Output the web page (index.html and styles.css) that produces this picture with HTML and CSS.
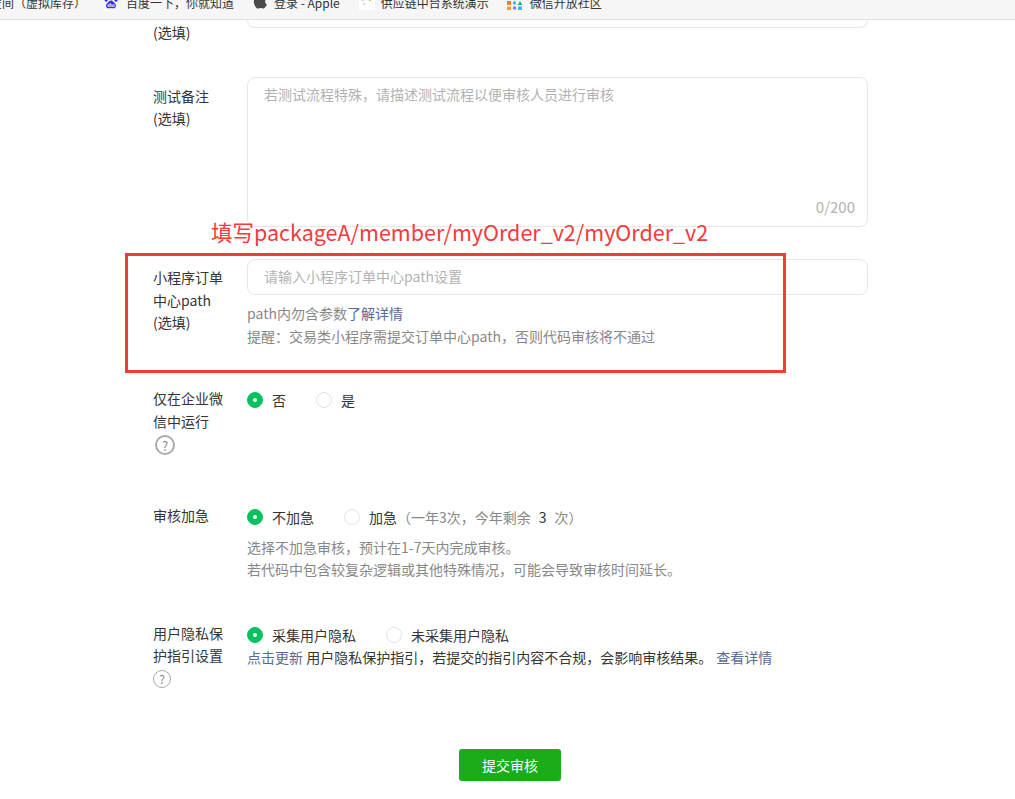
FILE: index.html
```html
<!DOCTYPE html>
<html lang="zh-CN">
<head>
<meta charset="utf-8">
<title>提交审核</title>
<link rel="stylesheet" href="styles.css">
</head>
<body>
<div class="bar">
  <span class="bm bm-first">空间（虚拟库存）</span>
  <span class="bm bm-baidu">
    <svg class="ic" viewBox="0 0 16 16"><g fill="#2932e1"><ellipse cx="3.2" cy="5.5" rx="1.7" ry="2.2"/><ellipse cx="6.3" cy="2.4" rx="1.6" ry="2.2"/><ellipse cx="10" cy="2.4" rx="1.6" ry="2.2"/><ellipse cx="13" cy="5.5" rx="1.7" ry="2.2"/><path d="M8 6.5c2 0 2.6 2 4 3 1.6 1.2 1.3 4.8-1.6 4.8-1 0-1.5-.4-2.4-.4s-1.500.4-2.400.4C2.700 14.300 2.400 10.700 4 9.500c1.400-1 2-3 4-3z"/></g><text x="8" y="13" text-anchor="middle" class="du">du</text></svg>
    百度一下，你就知道</span>
  <span class="bm bm-apple">
    <svg class="ic" viewBox="0 0 16 16"><path fill="#4a4a4a" d="M11.200 1c.1 1.100-.3 2-.9 2.700-.6.7-1.500 1.200-2.400 1.100-.1-1 .4-2 .9-2.600C9.400 1.500 10.400 1 11.200 1zM14 11.300c-.4.900-.6 1.300-1.100 2.100-.7 1.100-1.700 2.400-2.900 2.400-1.100 0-1.400-.7-2.800-.7s-1.800.7-2.900.7c-1.200 0-2.100-1.200-2.800-2.300C-.5 10.600-.7 7 .6 5.100c.9-1.300 2.300-2.100 3.600-2.100 1.400 0 2.200.7 3.300.7 1.100 0 1.700-.7 3.300-.7 1.200 0 2.400.6 3.300 1.700-2.900 1.600-2.400 5.700-.1 6.600z" transform="translate(1 0) scale(.92)"/></svg>
    登录 - Apple</span>
  <span class="bm bm-chain">
    <svg class="ic" viewBox="0 0 16 16"><rect width="16" height="16" fill="#fff"/><circle cx="8" cy="3" r="1.500" fill="#e0483d"/><circle cx="4" cy="6" r="1" fill="#b9c2c9"/><circle cx="11" cy="6" r="1" fill="#f0a030"/><circle cx="5" cy="10" r="1" fill="#c9ced3"/></svg>
    供应链中台系统演示</span>
  <span class="bm bm-open">
    <svg class="ic" viewBox="0 0 16 16"><path d="M3 0l2.500 4h-5z" fill="#8a7cf0" transform="translate(0 1)"/><circle cx="8.500" cy="3" r="2.200" fill="#07c160"/><path d="M14 .8l2 2.200-2 2.200-2-2.200z" fill="#5a8df5"/><rect x="1" y="7" width="4" height="4" fill="#fa7a2d"/><path d="M8.500 6.800l2 2.200-2 2.200-2-2.200z" fill="#3fb6ef"/><path d="M14 7l2.300 4h-4.600z" fill="#07c160"/><rect x="1" y="12.500" width="4" height="3.500" fill="#fa9d3b"/><circle cx="8.500" cy="14" r="1.800" fill="#8a7cf0"/><rect x="12" y="12.500" width="4" height="3.500" fill="#3fb6ef"/></svg>
    微信开放社区</span>
</div>

<main class="form">
  <div class="row row-a">
    <div class="label label-a">(选填)</div>
    <div class="field"><div class="stub"></div></div>
  </div>

  <div class="row row-b">
    <div class="label label-b">测试备注<br>(选填)</div>
    <div class="field">
      <div class="textarea">
        <span class="ph">若测试流程特殊，请描述测试流程以便审核人员进行审核</span>
        <span class="count">0/200</span>
      </div>
    </div>
  </div>

  <div class="row row-c">
    <div class="label label-c">小程序订单<br>中心path<br>(选填)</div>
    <div class="field">
      <div class="input"><span class="ph">请输入小程序订单中心path设置</span></div>
      <p class="help help-c">path内勿含参数<a class="link">了解详情</a></p>
      <p class="help">提醒：交易类小程序需提交订单中心path，否则代码审核将不通过</p>
    </div>
  </div>

  <div class="row row-d">
    <div class="label label-d">仅在企业微<br>信中运行<br><span class="q">?</span></div>
    <div class="field">
      <div class="radios">
        <span class="radio on"></span><span class="rt">否</span>
        <span class="radio"></span><span class="rt">是</span>
      </div>
    </div>
  </div>

  <div class="row row-e">
    <div class="label label-e">审核加急</div>
    <div class="field">
      <div class="radios">
        <span class="radio on"></span><span class="rt">不加急</span>
        <span class="radio"></span><span class="rt">加急<span class="muted">（一年3次，今年剩余</span><span class="num">3</span><span class="muted">次）</span></span>
      </div>
      <p class="help help-e">选择不加急审核，预计在1-7天内完成审核。</p>
      <p class="help">若代码中包含较复杂逻辑或其他特殊情况，可能会导致审核时间延长。</p>
    </div>
  </div>

  <div class="row row-f">
    <div class="label label-f">用户隐私保<br>护指引设置<br><span class="q q-small">?</span></div>
    <div class="field">
      <div class="radios">
        <span class="radio on"></span><span class="rt">采集用户隐私</span>
        <span class="radio"></span><span class="rt">未采集用户隐私</span>
      </div>
      <p class="guide"><a class="link">点击更新</a> 用户隐私保护指引，若提交的指引内容不合规，会影响审核结果。 <a class="link link-more">查看详情</a></p>
    </div>
  </div>

  <div class="actions"><button class="submit" type="button">提交审核</button></div>
</main>

<div class="note">填写packageA/member/myOrder_v2/myOrder_v2</div>
<div class="redbox"></div>
</body>
</html>
```

FILE: styles.css
```css
* { box-sizing: border-box; }
html, body { margin: 0; padding: 0; height: 799px; overflow: hidden; background: #fff; }
body { font-family: "Noto Sans CJK SC", "Noto Sans", sans-serif; font-size: 14px; color: #353535; position: relative; }

.bar { height: 20px; background: #f6f6f6; border-bottom: 1px solid #e3e3e3; display: flex; overflow: hidden; font-size: 12px; color: #333; white-space: nowrap; }
.bm { display: flex; align-items: center; height: 14px; margin-top: -5px; flex: none; }
.ic { width: 16px; height: 16px; flex: none; margin-right: 7px; }
.du { font-size: 6px; fill: #fff; font-family: "Liberation Sans", sans-serif; font-weight: 700; }
.bm-first { margin-left: -10px; width: 96px; }
.bm-baidu { margin-left: 17px; width: 132px; }
.bm-apple { margin-left: 18px; }
.bm-chain { margin-left: 19px; }
.bm-open { margin-left: 17px; }
.bm-apple .ic { margin-right: 5px; }
.bm-chain .ic { margin-right: 6px; }
.bm-open .ic { margin-right: 8px; }

.form { padding-left: 153px; }
.row { display: flex; }
.label { width: 94px; flex: none; line-height: 22.4px; }
.field { width: 621px; flex: none; }
.row-b { margin-top: 34px; }
.row-c { margin-top: 32px; }
.row-d { margin-top: 41px; }
.row-e { margin-top: 49px; }
.row-f { margin-top: 42px; }

.label-a { padding-top: 1px; }
.label-b { padding-top: 8px; line-height: 22px; }
.label-c { padding-top: 7px; }
.label-d, .label-e, .label-f { margin-top: -1px; }
.stub { height: 8px; border: 1px solid #e7e7e7; border-top: 0; border-radius: 0 0 8px 8px; }
.textarea { height: 150px; border: 1px solid #e7e7e7; border-radius: 8px; padding: 5px 12px 0 16px; display: flex; flex-direction: column; justify-content: space-between; }
.ph { color: #b2b2b2; line-height: 22px; }
.count { color: #b2b2b2; align-self: flex-end; line-height: 22px; margin-bottom: 8px; font-size: 15px; }
.input { height: 36px; border: 1px solid #e7e7e7; border-radius: 8px; padding: 5px 16px; }

.help { margin: 0; line-height: 22.4px; color: #888; }
.help-c { margin-top: 7px; }
.help-e { margin-top: 7px; }
.link { color: #576b95; }
.link-more { margin-left: 1px; }
.guide { margin: -1px 0 0; line-height: 22px; color: #353535; }

.radios { display: flex; align-items: center; height: 24px; }
.radio { width: 16px; height: 16px; border-radius: 50%; border: 1px solid #e3e3e3; flex: none; background: #fff; position: relative; }
.radio.on { background: #07c160; border-color: #07c160; }
.radio.on::after { content: ""; position: absolute; left: 5px; top: 5px; width: 4px; height: 4px; border-radius: 50%; background: #fff; }
.rt { margin-left: 9px; margin-right: 30px; color: #353535; white-space: nowrap; }
.muted { color: #888; }
.num { margin: 0 8px; }

.q { display: inline-flex; width: 20px; height: 20px; margin: 3px 0 0 2px; border: 2px solid #aaa; border-radius: 50%; align-items: center; justify-content: center; color: #888; font-size: 13px; line-height: 1; }
.q-small { width: 18px; height: 18px; margin: 2px 0 0; border-width: 1px; font-size: 12px; }

.actions { padding-left: 306px; margin-top: 60px; }
.submit { width: 102px; height: 32px; border: 0; border-radius: 3px; background: #1aad19; color: #fff; font: inherit; font-size: 14px; padding: 0; }

.note { position: absolute; left: 211px; top: 216px; color: #f33b3b; font-size: 21.5px; line-height: 32px; white-space: nowrap; }
.redbox { position: absolute; left: 125px; top: 253px; width: 661px; height: 120px; border: 3px solid #f33b3b; }
```
